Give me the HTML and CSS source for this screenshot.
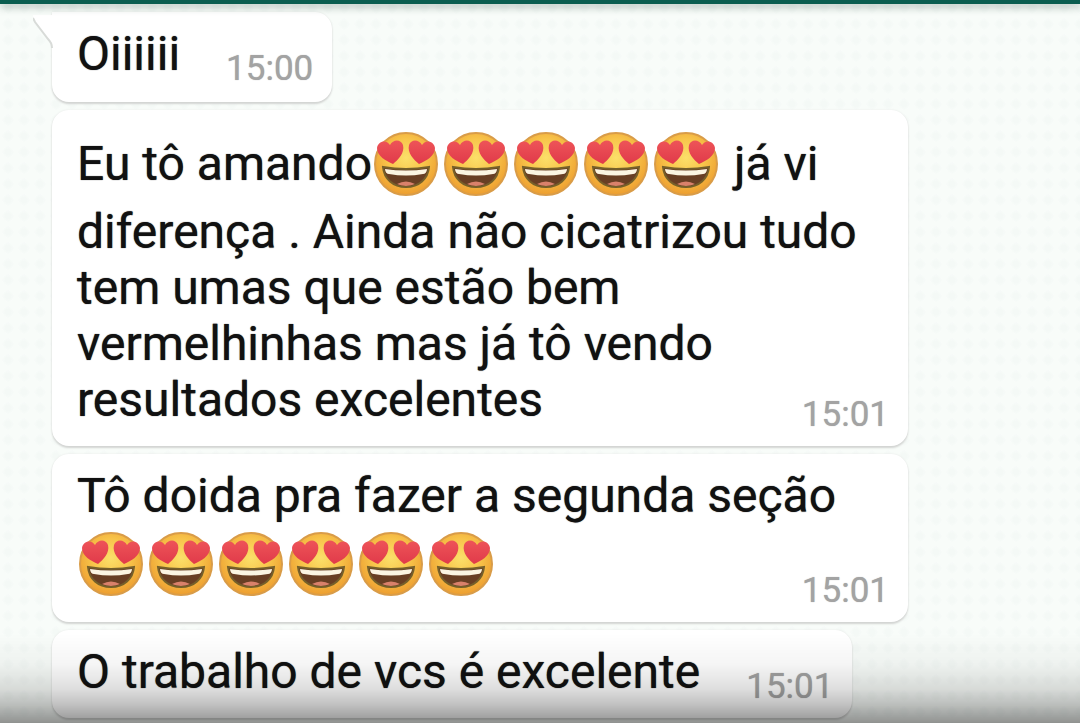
FILE: index.html
```
<!DOCTYPE html>
<html lang="pt-BR">
<head>
<meta charset="utf-8">
<meta name="viewport" content="width=device-width, initial-scale=1">
<title>Conversa</title>
<link rel="stylesheet" href="styles.css">
</head>
<body>
<svg class="defs" aria-hidden="true">
  <defs>
    <radialGradient id="face" cx="50%" cy="40%" r="58%">
      <stop offset="0" stop-color="#fbe06a"/>
      <stop offset=".5" stop-color="#f8c64c"/>
      <stop offset="1" stop-color="#eea031"/>
    </radialGradient>
    <linearGradient id="heart" x1="0" y1="0" x2="0" y2="1">
      <stop offset="0" stop-color="#ee5458"/>
      <stop offset="1" stop-color="#e03a4a"/>
    </linearGradient>
    <symbol id="love" viewBox="0 0 64 64">
      <circle cx="32" cy="32" r="31" fill="url(#face)" stroke="#d99c48" stroke-width="2"/>
      <path d="M19 32C12 29 3 24 3 16C4 9 12 7 16 13C19 7 27 7 29 13C31 21 24 28 19 32Z" fill="url(#heart)"/>
      <path d="M45 32C40 28 33 21 35 13C37 7 45 7 48 13C52 7 60 9 61 16C61 24 52 29 45 32Z" fill="url(#heart)"/>
      <path d="M9 35Q32 39 55 35C54 47 45 55 32 55C19 55 10 47 9 35Z" fill="#683f24"/>
      <path d="M11 37Q32 40 53 37C53 40 51 42 49 42Q32 45 15 42C13 42 11 40 11 37Z" fill="#fbf5e2"/>
      <path d="M23 52Q32 47 41 52Q32 56 23 52Z" fill="#d9816b"/>
      <path d="M9 35Q32 39 55 35C54 47 45 55 32 55C19 55 10 47 9 35Z" fill="none" stroke="#75602a" stroke-width="2"/>
    </symbol>
  </defs>
</svg>
<header class="topbar"></header>
<main class="chat">
  <article class="bubble bubble-first">
    <svg class="tail" viewBox="0 0 22 34" aria-hidden="true"><path d="M0 1H22V34L19 30Q18 27 15 24L2 7Q0 4 0 1Z" fill="#fff"/><path d="M0 4L2 8L15 25Q19 29 19 34" fill="none" stroke="#d8dbd8" stroke-width="2"/></svg>
    <p class="text">Oiiiiii</p>
    <time class="time">15:00</time>
  </article>
  <article class="bubble bubble-wide">
    <p class="text">Eu tô amando<svg class="emoji"><use href="#love"/></svg><svg class="emoji"><use href="#love"/></svg><svg class="emoji"><use href="#love"/></svg><svg class="emoji"><use href="#love"/></svg><svg class="emoji"><use href="#love"/></svg> já vi diferença . Ainda não cicatrizou tudo tem umas que estão bem vermelhinhas mas já tô vendo resultados excelentes</p>
    <time class="time">15:01</time>
  </article>
  <article class="bubble bubble-wide">
    <p class="text">Tô doida pra fazer a segunda seção <svg class="emoji"><use href="#love"/></svg><svg class="emoji"><use href="#love"/></svg><svg class="emoji"><use href="#love"/></svg><svg class="emoji"><use href="#love"/></svg><svg class="emoji"><use href="#love"/></svg><svg class="emoji"><use href="#love"/></svg></p>
    <time class="time">15:01</time>
  </article>
  <article class="bubble">
    <p class="text">O trabalho de vcs é excelente</p>
    <time class="time">15:01</time>
  </article>
</main>
<div class="shade"></div>
</body>
</html>
```
FILE: styles.css
```
* {
  box-sizing: border-box;
}

body {
  margin: 0;
  min-height: 100vh;
  overflow: hidden;
  font-family: Roboto, "Liberation Sans", sans-serif;
  background-color: #f8fcf9;
  background-image: radial-gradient(circle, #f4f9f6 3px, transparent 6px);
  background-size: 16px 16px;
}

.defs {
  position: absolute;
  width: 0;
  height: 0;
}

.topbar {
  position: relative;
  z-index: 1;
  height: 4px;
  background: #0b5d50;
  box-shadow: 0 2px 8px rgba(40, 70, 60, 0.5);
}

.chat {
  display: flex;
  flex-direction: column;
  align-items: flex-start;
  gap: 8px;
  padding: 8px 52px 4px;
}

.bubble {
  position: relative;
  display: flex;
  align-items: flex-end;
  gap: 46px;
  padding: 14px 19px 18px 25px;
  border-radius: 17px;
  background: #fff;
  box-shadow: 0 2px 2px #d2d4d2, 0 0 2px #e6e8e6;
}

.bubble-first {
  padding-bottom: 20px;
  border-top-left-radius: 0;
}

.bubble-wide {
  display: grid;
  width: 100%;
  max-width: 856px;
}

.bubble-wide > * {
  grid-area: 1 / 1;
}

.tail {
  position: absolute;
  top: 2px;
  left: -19px;
  width: 22px;
  height: 34px;
}

.text {
  margin: 0;
  font-size: 48px;
  line-height: 56px;
  color: #111;
  text-shadow: 0 0 1px #333;
}

.time {
  align-self: end;
  justify-self: end;
  margin-bottom: -8px;
  font-size: 35px;
  line-height: 42px;
  color: #a3a3a3;
  text-shadow: 0 0 1px #aaa;
}

.emoji {
  width: 64px;
  height: 64px;
  margin: 8px 4px 8px 2px;
  vertical-align: -24px;
}

.shade {
  position: fixed;
  right: 0;
  bottom: 0;
  left: 0;
  z-index: 2;
  height: 90px;
  pointer-events: none;
  background: linear-gradient(transparent, rgba(0, 0, 0, 0.04) 35%, rgba(0, 0, 0, 0.13) 62%, rgba(0, 0, 0, 0.24) 79%, rgba(0, 0, 0, 0.42));
}
```
